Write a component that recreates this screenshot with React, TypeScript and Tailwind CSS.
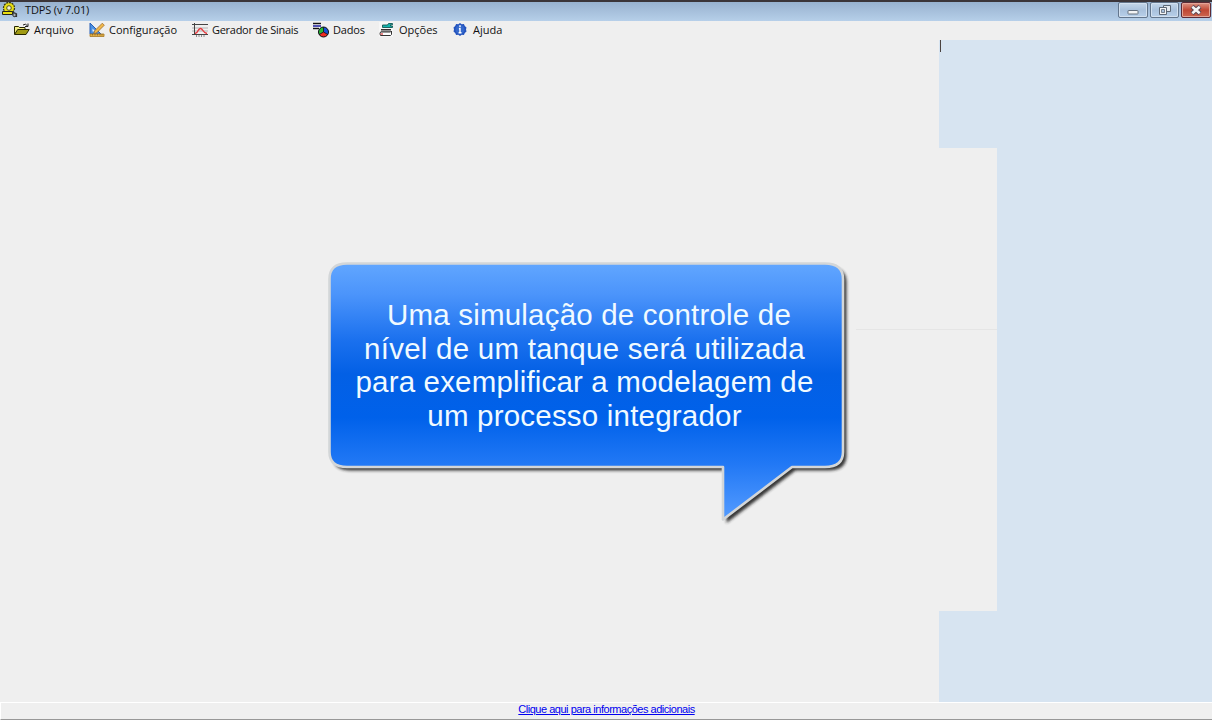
import type { ReactNode } from "react";

const MENU: { label: string; icon: ReactNode; itemClass: string; textClass: string }[] = [
  { label: "Arquivo", icon: <FolderIcon />, itemClass: "w-[75px]", textClass: "tracking-[0px]" },
  { label: "Configuração", icon: <RulerIcon />, itemClass: "w-[103px]", textClass: "tracking-[0px]" },
  { label: "Gerador de Sinais", icon: <SignalIcon />, itemClass: "w-[121px]", textClass: "tracking-[-0.28px]" },
  { label: "Dados", icon: <DataIcon />, itemClass: "w-[66px]", textClass: "tracking-[-0.2px]" },
  { label: "Opções", icon: <OptionsIcon />, itemClass: "w-[74px]", textClass: "tracking-[0px]" },
  { label: "Ajuda", icon: <HelpIcon />, itemClass: "w-[60px]", textClass: "tracking-[0px]" },
];

export default function App() {
  return (
    <div className="relative flex h-[720px] w-[1212px] flex-col overflow-hidden bg-[#efefef] font-['Open_Sans','Noto_Sans',sans-serif] text-[#111]">
      <TitleBar />
      <MenuBar />

      {/* Workspace */}
      <main className="flex h-[662px]">
        <div className="w-[939px] pt-[289px] pl-[856px]">
          <div className="h-px bg-[#e5e5e5]" />
        </div>
        <div className="flex w-[273px] flex-col bg-[#d7e4f1]">
          <div className="h-[108px] pl-px">
            <div className="h-3 w-px bg-[#4a4240]" />
          </div>
          <div className="h-[463px] w-[58px] bg-[#efefef] pt-[181px]">
            <div className="h-px bg-[#e5e5e5]" />
          </div>
        </div>
      </main>

      <footer className="flex h-[18px] items-start justify-center border-t border-b border-l border-t-white border-b-[#979797] border-l-white font-['Liberation_Sans',sans-serif] text-[11px] leading-[12px]">
        <a href="#" className="text-[#0000f0] underline tracking-[-0.48px]">
          Clique aqui para informações adicionais
        </a>
      </footer>

      <Callout />
    </div>
  );
}

function TitleBar() {
  return (
    <header className="flex h-[21px] items-start border-t-2 border-t-[#3b3539] bg-gradient-to-b from-[#98b2cf] to-[#b6cfe9] pl-[2px]">
      <GearIcon />
      <span className="ml-[7px] flex-1 text-[11px] leading-[16px] tracking-[-0.15px]">TDPS (v 7.01)</span>
      <div className="flex gap-[2px] pr-px">
        <div className="flex h-[16px] w-[30px] items-center justify-center rounded-[2px] border border-[#63768d] bg-gradient-to-b from-[#c4d6e9] via-[#a9c1dc] to-[#b8d0ea] shadow-[inset_0_0_0_1px_#d2e0ef]">
          <svg width="12" height="12" viewBox="0 0 12 12">
            <rect x="1" y="6.5" width="10" height="3.5" rx="0.5" fill="#f4f4f4" stroke="#65707e" />
          </svg>
        </div>
        <div className="flex h-[16px] w-[29px] items-center justify-center rounded-[2px] border border-[#63768d] bg-gradient-to-b from-[#c4d6e9] via-[#a9c1dc] to-[#b8d0ea] shadow-[inset_0_0_0_1px_#d2e0ef]">
          <svg width="12" height="12" viewBox="0 0 12 12">
            <path d="M4.5 1.5h7v6h-7z" fill="#e4e9ef" stroke="#5d6876" />
            <path d="M.5 3.5h7v7h-7z" fill="#f4f4f4" stroke="#5d6876" />
            <path d="M2.500 5.500h3v3h-3z" fill="#a9c1dc" stroke="#5d6876" strokeWidth="0.8" />
          </svg>
        </div>
        <div className="flex h-[16px] w-[30px] items-center justify-center rounded-[2px] border border-[#5c2a35] bg-gradient-to-b from-[#dc9384] via-[#bf4734] to-[#cd6650] shadow-[inset_0_0_0_1px_#e2a597]">
          <svg width="12" height="12" viewBox="0 0 12 12">
            <path d="M2 2.500l8 7M10 2.500l-8 7" stroke="#5b4450" strokeWidth="4.500" />
            <path d="M2.300 2.800l7.400 6.400M9.700 2.800L2.300 9.200" stroke="#f5f5f5" strokeWidth="2.600" />
          </svg>
        </div>
      </div>
    </header>
  );
}

function MenuBar() {
  return (
    <nav className="flex h-[19px] items-start bg-[#efefef] pl-[14px]">
      {MENU.map((item) => (
        <div key={item.label} className={`flex h-[18px] shrink-0 items-center gap-1 ${item.itemClass}`}>
          {item.icon}
          <span className={`text-[11px] leading-[18px] whitespace-nowrap ${item.textClass}`}>{item.label}</span>
        </div>
      ))}
    </nav>
  );
}

function Callout() {
  return (
    <div className="absolute left-[320px] top-[255px] h-[280px] w-[540px]">
      <svg className="absolute inset-0" width="540" height="280" viewBox="0 0 540 280">
        <defs>
          <linearGradient id="balloon" x1="0" y1="9" x2="0" y2="265" gradientUnits="userSpaceOnUse">
            <stop offset="0" stopColor="#61a6ff" />
            <stop offset="0.12" stopColor="#4b94fb" />
            <stop offset="0.3" stopColor="#1a70ee" />
            <stop offset="0.43" stopColor="#0360e5" />
            <stop offset="0.6" stopColor="#0061ea" />
            <stop offset="0.78" stopColor="#2178f5" />
            <stop offset="1" stopColor="#559cff" />
          </linearGradient>
          <filter id="shade" x="-5%" y="-5%" width="112%" height="115%">
            <feGaussianBlur stdDeviation="1.8" />
          </filter>
        </defs>
        <path
          d="M27 8.5H505Q523 8.5 523 24V197Q523 212 505 212H472L403 264.500V212H27Q9.500 212 9.500 197V24Q9.500 8.500 27 8.500Z"
          transform="translate(3.5 3.5)"
          fill="#222"
          opacity="0.9"
          filter="url(#shade)"
        />
        <path
          d="M27 8.5H505Q523 8.5 523 24V197Q523 212 505 212H472L403 264.500V212H27Q9.500 212 9.500 197V24Q9.500 8.500 27 8.500Z"
          fill="url(#balloon)"
          stroke="#d3d6d8"
          strokeWidth="2.6"
          strokeLinejoin="round"
        />
      </svg>
      <div className="relative flex flex-col items-center pt-[43px] pr-[11px] font-['Liberation_Sans',sans-serif] text-[29.5px] leading-[33.5px] whitespace-nowrap text-[#f0faff]">
        <span className="pl-[9px] tracking-[0.2px]">Uma simulação de controle de</span>
        <span className="tracking-[0.24px]">nível de um tanque será utilizada</span>
        <span className="tracking-[0.17px]">para exemplificar a modelagem de</span>
        <span className="tracking-[0.2px]">um processo integrador</span>
      </div>
    </div>
  );
}

function GearIcon() {
  return (
    <svg width="16" height="16" viewBox="0 0 16 16">
      <circle cx="7" cy="6" r="5.5" fill="#e9df13" stroke="#38381a" strokeWidth="1.3" strokeDasharray="2 0.8" />
      <circle cx="7" cy="6" r="2.3" fill="#f3f3d0" stroke="#55551c" />
      <path d="M0.5 9.5h10v3h-10z" fill="#e9df13" stroke="#252518" />
      <path d="M10 10l4 1.5M12 14.3h2.5v-3" fill="none" stroke="#333" strokeWidth="1.2" />
      <circle cx="12.5" cy="13" r="1.7" fill="#a9b4bb" stroke="#333" />
    </svg>
  );
}

function FolderIcon() {
  return (
    <svg width="16" height="16" viewBox="0 0 16 16">
      <path d="M.5 12V4.500h4l1 1h5.500V8" fill="#f3ef83" stroke="#262600" />
      <path d="M.5 12.500L3.700 7.500h11.500L12 12.500z" fill="#a09a12" stroke="#262600" />
      <path d="M9 3q2.500-2 4.500.8M14 1.500V4.500h-3" fill="none" stroke="#222" />
    </svg>
  );
}

function RulerIcon() {
  return (
    <svg width="16" height="16" viewBox="0 0 16 16">
      <path d="M1 1v11h11z" fill="#4b91e2" stroke="#285fb5" />
      <path d="M3.500 6.500v3h3z" fill="#efefef" />
      <path d="M13.300 1.200l2 2-7.600 7.600-3 1 1-3z" fill="#f0b84a" stroke="#9e6c2b" strokeWidth="0.8" />
      <path d="M1 12h14v2.500H1z" fill="#e5b345" stroke="#a57727" strokeWidth="0.8" />
      <path d="M3.500 12v1.500M6 12v1.500M8.500 12v1.500M11 12v1.500M13 12v1.500" stroke="#83602a" strokeWidth="0.7" />
    </svg>
  );
}

function SignalIcon() {
  return (
    <svg width="16" height="16" viewBox="0 0 16 16">
      <path d="M0 6h16M0 9h16" stroke="#a2a2a2" strokeWidth="0.8" />
      <path d="M2.500 1v12M0 2.500h16M0 12.500h16" stroke="#444" />
      <path d="M4.500 13v2M7 13v2M9.500 13v2M12 13v2" stroke="#777" strokeWidth="0.8" />
      <path d="M3 11.500q2.200-.5 3.500-3.500 2-3 4 0 1.700 2.800 4.500 3.500" fill="none" stroke="#e8363b" strokeWidth="1.4" />
    </svg>
  );
}

function DataIcon() {
  return (
    <svg width="16" height="16" viewBox="0 0 16 16">
      <path d="M0 .5h8v7H0z" fill="#fff" />
      <path d="M0 1.500h8M0 6.500h6" stroke="#111" strokeWidth="1.5" />
      <path d="M0 4h8" stroke="#17179a" strokeWidth="1.5" />
      <circle cx="10.5" cy="10" r="5" fill="#1550d8" />
      <path d="M10.500 10V5A5 5 0 0 0 6.200 12.500z" fill="#26ba35" />
      <path d="M10.500 10L6.200 12.500A5 5 0 0 0 14.800 12.500z" fill="#ee2b20" />
      <circle cx="10.5" cy="10" r="5" fill="none" stroke="#111" />
      <path d="M10.500 5v5l-4.300 2.500M10.500 10l4.300 2.500" fill="none" stroke="#111" strokeWidth="0.8" />
    </svg>
  );
}

function OptionsIcon() {
  return (
    <svg width="16" height="16" viewBox="0 0 16 16">
      <path d="M0 0h14v15H0z" fill="#f6f6f6" />
      <path d="M3.500 3h5l1-1.500h4v1.300h-2v1.200h2v1.500h-10z" fill="#12b5ae" stroke="#155551" strokeWidth="0.9" />
      <path d="M2 7.500h10M2 9h10" stroke="#333" />
      <path d="M1.500 10h10l1-1v3.500l-1 1h-10q-1-1.700 0-3.500z" fill="#fff" stroke="#333" />
      <path d="M1.500 12h2.500" stroke="#df4a4a" strokeWidth="1.3" />
    </svg>
  );
}

function HelpIcon() {
  return (
    <svg width="16" height="16" viewBox="0 0 16 16">
      <path d="M7 1l1.700 1.200 2.200-.1.900 2 1.700 1.300-.5 2.100.5 2.100-1.700 1.300-.9 2-2.200-.1L7 14l-1.700-1.200-2.200.1-.9-2-1.700-1.300.5-2.100-.5-2.100 1.700-1.300.9-2 2.200.1z" fill="#2453bd" />
      <circle cx="7" cy="7.5" r="4.5" fill="#3468cc" />
      <path d="M7 3.300v1.900M5.900 6.700H7v4M5.600 10.800h2.900" stroke="#fff" strokeWidth="1.4" fill="none" />
    </svg>
  );
}
